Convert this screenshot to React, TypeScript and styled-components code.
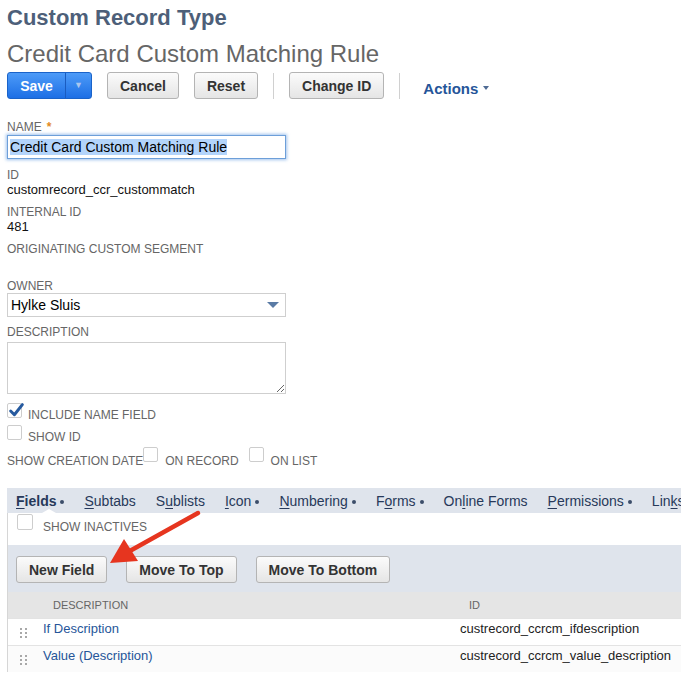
import React from 'react';
import styled, { createGlobalStyle } from 'styled-components';

const Global = createGlobalStyle`
  html, body { margin: 0; padding: 0; background: #fff; }
  body { font-family: "Liberation Sans", Arial, Helvetica, sans-serif; }
  * { box-sizing: border-box; }
`;

const Page = styled.div`
  position: relative;
  width: 681px;
  height: 673px;
  overflow: hidden;
  padding-left: 7px;
`;

const RecordType = styled.h1`
  margin: 0;
  padding-top: 5px;
  font-size: 22px;
  line-height: 26px;
  font-weight: bold;
  color: #4d5f79;
  white-space: nowrap;
`;

const RecordName = styled.h2`
  margin: 9px 0 0;
  font-size: 24px;
  line-height: 28px;
  font-weight: normal;
  color: #666;
  white-space: nowrap;
`;

const Toolbar = styled.div`
  display: flex;
  align-items: center;
  gap: 15px;
  margin-top: 4px;
  height: 27px;
`;

const SplitButton = styled.div`
  display: flex;
  width: 85px;
  height: 27px;
  border: 1px solid #1a63c9;
  border-radius: 3px;
  background: linear-gradient(#4d9bf8, #1d6fe5);
  overflow: hidden;
`;

const SplitMain = styled.button`
  width: 57px;
  border: 0;
  padding: 0;
  background: transparent;
  color: #fff;
  font: bold 14px "Liberation Sans", Arial, sans-serif;
`;

const SplitArrow = styled.button`
  flex: 1;
  border: 0;
  border-left: 1px solid #1a5cc0;
  padding: 0;
  background: transparent;
  color: #aac6ee;
  font-size: 9px;
  line-height: 1;
`;

const Button = styled.button`
  height: 27px;
  padding: 0 12px;
  border: 1px solid #b4b4b4;
  border-radius: 3px;
  background: linear-gradient(#fbfbfb, #e5e5e5);
  color: #333;
  font: bold 14px "Liberation Sans", Arial, sans-serif;
  white-space: nowrap;
`;

const Divider = styled.span`
  width: 1px;
  height: 26px;
  background: #d0d0d0;
`;

const ActionsMenu = styled.span`
  margin-left: 8px;
  margin-top: 5px;
  display: flex;
  align-items: center;
  gap: 5px;
  color: #255599;
  font-size: 15px;
  font-weight: bold;
`;

const Caret = styled.span`
  width: 0;
  height: 0;
  border-left: 3.5px solid transparent;
  border-right: 3.5px solid transparent;
  border-top: 4px solid #4f6b94;
`;

const Label = styled.div<{ $mt: number }>`
  margin-top: ${p => p.$mt}px;
  font-size: 12px;
  line-height: 14px;
  color: #666;
  text-transform: uppercase;
  white-space: nowrap;
`;

const Required = styled.span`
  color: #e38a1e;
  font-weight: bold;
  margin-left: 5px;
`;

const Value = styled.div`
  font-size: 13px;
  line-height: 15px;
  min-height: 15px;
  color: #111;
`;

const TextBox = styled.div`
  margin-top: 1px;
  width: 279px;
  height: 24px;
  border: 1px solid #6d9fd9;
  box-shadow: 0 0 3px 1px rgba(100, 156, 225, 0.6);
  padding: 3px 2px 0;
  font-size: 14px;
  line-height: 17px;
  color: #000;
  white-space: nowrap;
`;

const Selected = styled.span`
  background: #b3d4fb;
`;

const SelectBox = styled.div`
  width: 279px;
  height: 24px;
  border: 1px solid #cfcfcf;
  display: flex;
  align-items: center;
  justify-content: space-between;
  padding: 0 6px 0 3px;
  font-size: 14px;
  color: #000;
`;

const SelectArrow = styled.span`
  width: 0;
  height: 0;
  border-left: 6px solid transparent;
  border-right: 6px solid transparent;
  border-top: 6px solid #5a7ba5;
`;

const TextArea = styled.textarea`
  display: block;
  margin-top: 3px;
  width: 279px;
  height: 52px;
  border: 1px solid #cfcfcf;
  resize: both;
  font-family: inherit;
`;

const CheckRow = styled.div<{ $mt: number }>`
  display: flex;
  align-items: flex-end;
  margin-top: ${p => p.$mt}px;
  font-size: 12px;
  line-height: 14px;
  color: #666;
  white-space: nowrap;
`;

const Box = styled.span<{ $lift: number; $gap: number; $size?: number }>`
  position: relative;
  flex: none;
  width: ${p => p.$size ?? 15}px;
  height: ${p => p.$size ?? 15}px;
  margin-bottom: ${p => p.$lift}px;
  margin-right: ${p => p.$gap}px;
  border: 1px solid #cdcdcd;
  border-radius: 2px;
  background: #fff;
`;

const CheckMark = styled.svg`
  position: absolute;
  left: 0;
  top: -2px;
`;

const RowText = styled.span<{ $mr?: number; $mb?: number }>`
  margin-right: ${p => p.$mr ?? 0}px;
  margin-bottom: ${p => p.$mb ?? 0}px;
`;

const Panel = styled.div`
  margin-top: 20px;
  width: 700px;
  border-left: 1px solid #d6d6d6;
`;

const TabBar = styled.div`
  position: relative;
  display: flex;
  gap: 20px;
  height: 25px;
  margin-left: -1px;
  padding: 1px 0 0 9px;
  background: #dfe4ec;
  font-size: 14px;
  line-height: 24px;
  color: #27395a;
  white-space: nowrap;
`;

const Tab = styled.span<{ $active?: boolean }>`
  display: inline-flex;
  align-items: center;
  font-weight: ${p => (p.$active ? 'bold' : 'normal')};
  u { text-decoration-thickness: 1px; text-underline-offset: 2px; }
`;

const Dot = styled.span`
  width: 4px;
  height: 4px;
  margin-left: 4px;
  margin-top: 1px;
  border-radius: 50%;
  background: #3c4d6a;
`;

const ActiveNotch = styled.span`
  position: absolute;
  left: 35px;
  bottom: 0;
  width: 0;
  height: 0;
  border-left: 7px solid transparent;
  border-right: 7px solid transparent;
  border-bottom: 4px solid #fff;
`;

const InactiveRow = styled.div`
  height: 32px;
  display: flex;
  align-items: flex-start;
  padding: 1px 0 0 9px;
  font-size: 12px;
  line-height: 14px;
  color: #666;
`;

const InactiveText = styled.span`
  margin-top: 6px;
`;

const ButtonBar = styled.div`
  height: 47px;
  display: flex;
  align-items: flex-start;
  gap: 19px;
  padding: 11px 0 0 8px;
  background: #dfe4ec;
`;

const HeadRow = styled.div`
  display: grid;
  grid-template-columns: 35px 417px 1fr;
  align-items: center;
  height: 26px;
  background: #e5e5e5;
  font-size: 11px;
  color: #666;
  white-space: nowrap;
`;

const HeadCell = styled.span<{ $pl: number }>`
  padding-left: ${p => p.$pl}px;
`;

const BodyRow = styled.div<{ $alt?: boolean }>`
  display: grid;
  grid-template-columns: 35px 417px 1fr;
  align-items: start;
  height: 27px;
  padding-top: 2px;
  background: ${p => (p.$alt ? '#fbfbfb' : '#fff')};
  border-top: 1px solid #e3e3e3;
  font-size: 13px;
  line-height: 15px;
  color: #222;
  white-space: nowrap;
`;

const LinkCell = styled.a`
  color: #255599;
  text-decoration: none;
`;

const Handle = styled.span`
  display: grid;
  grid-template-columns: 2px 2px;
  gap: 2px 3px;
  margin-left: 12px;
  margin-top: 7px;
  i { width: 2px; height: 2px; background: #a8a8a8; display: block; }
`;

const Arrow = styled.svg`
  position: absolute;
  left: 0;
  top: 0;
  pointer-events: none;
`;

const Check = () => (
  <CheckMark width="17" height="17" viewBox="0 0 16 16">
    <path d="M2.5 8.5 L6 12 L13.5 2.5" fill="none" stroke="#265a9f" strokeWidth="2.8" strokeLinecap="round" strokeLinejoin="round" />
  </CheckMark>
);

const DragHandle = () => (
  <Handle>
    <i /><i /><i /><i /><i /><i />
  </Handle>
);

const tabs: { pre: string; u: string; post: string; dot?: boolean; active?: boolean }[] = [
  { pre: '', u: 'F', post: 'ields', dot: true, active: true },
  { pre: '', u: 'S', post: 'ubtabs' },
  { pre: 'S', u: 'u', post: 'blists' },
  { pre: '', u: 'I', post: 'con', dot: true },
  { pre: '', u: 'N', post: 'umbering', dot: true },
  { pre: 'F', u: 'o', post: 'rms', dot: true },
  { pre: 'On', u: 'l', post: 'ine Forms' },
  { pre: '', u: 'P', post: 'ermissions', dot: true },
  { pre: 'Lin', u: 'k', post: 's' },
];

export default function App() {
  return (
    <>
      <Global />
      <Page>
        <RecordType>Custom Record Type</RecordType>
        <RecordName>Credit Card Custom Matching Rule</RecordName>
        <Toolbar>
          <SplitButton>
            <SplitMain>Save</SplitMain>
            <SplitArrow>▼</SplitArrow>
          </SplitButton>
          <Button>Cancel</Button>
          <Button>Reset</Button>
          <Divider />
          <Button>Change ID</Button>
          <Divider />
          <ActionsMenu>Actions<Caret /></ActionsMenu>
        </Toolbar>

        <Label $mt={21}>Name<Required>*</Required></Label>
        <TextBox><Selected>Credit Card Custom Matching Rule</Selected></TextBox>

        <Label $mt={9}>ID</Label>
        <Value>customrecord_ccr_custommatch</Value>
        <Label $mt={8}>Internal ID</Label>
        <Value>481</Value>
        <Label $mt={8}>Originating Custom Segment</Label>
        <Value />

        <Label $mt={8}>Owner</Label>
        <SelectBox>Hylke Sluis<SelectArrow /></SelectBox>

        <Label $mt={8}>Description</Label>
        <TextArea readOnly />

        <CheckRow $mt={9}>
          <Box $lift={3} $gap={6}><Check /></Box>
          <RowText $mb={-1}>INCLUDE NAME FIELD</RowText>
        </CheckRow>
        <CheckRow $mt={4}>
          <Box $lift={3} $gap={6} />
          <RowText $mb={-1}>SHOW ID</RowText>
        </CheckRow>
        <CheckRow $mt={4}>
          <RowText>SHOW CREATION DATE</RowText>
          <Box $lift={6} $gap={7} />
          <RowText $mr={10}>ON RECORD</RowText>
          <Box $lift={6} $gap={7} />
          <RowText>ON LIST</RowText>
        </CheckRow>

        <Panel>
          <TabBar>
            {tabs.map(t => (
              <Tab key={t.pre + t.u + t.post} $active={t.active}>
                {t.pre}<u>{t.u}</u>{t.post}
                {t.dot && <Dot />}
              </Tab>
            ))}
            <ActiveNotch />
          </TabBar>
          <InactiveRow>
            <Box $lift={0} $gap={10} $size={16} />
            <InactiveText>SHOW INACTIVES</InactiveText>
          </InactiveRow>
          <ButtonBar>
            <Button>New Field</Button>
            <Button>Move To Top</Button>
            <Button>Move To Bottom</Button>
          </ButtonBar>
          <HeadRow>
            <span />
            <HeadCell $pl={10}>DESCRIPTION</HeadCell>
            <HeadCell $pl={9}>ID</HeadCell>
          </HeadRow>
          <BodyRow>
            <DragHandle />
            <LinkCell href="#">If Description</LinkCell>
            <span>custrecord_ccrcm_ifdescription</span>
          </BodyRow>
          <BodyRow $alt>
            <DragHandle />
            <LinkCell href="#">Value (Description)</LinkCell>
            <span>custrecord_ccrcm_value_description</span>
          </BodyRow>
        </Panel>

        <Arrow width="681" height="673" viewBox="0 0 681 673">
          <line x1="198" y1="513" x2="128" y2="552" stroke="#e6351f" strokeWidth="4.5" strokeLinecap="round" />
          <polygon points="110,563 124,539 138,561" fill="#e6351f" />
        </Arrow>
      </Page>
    </>
  );
}
